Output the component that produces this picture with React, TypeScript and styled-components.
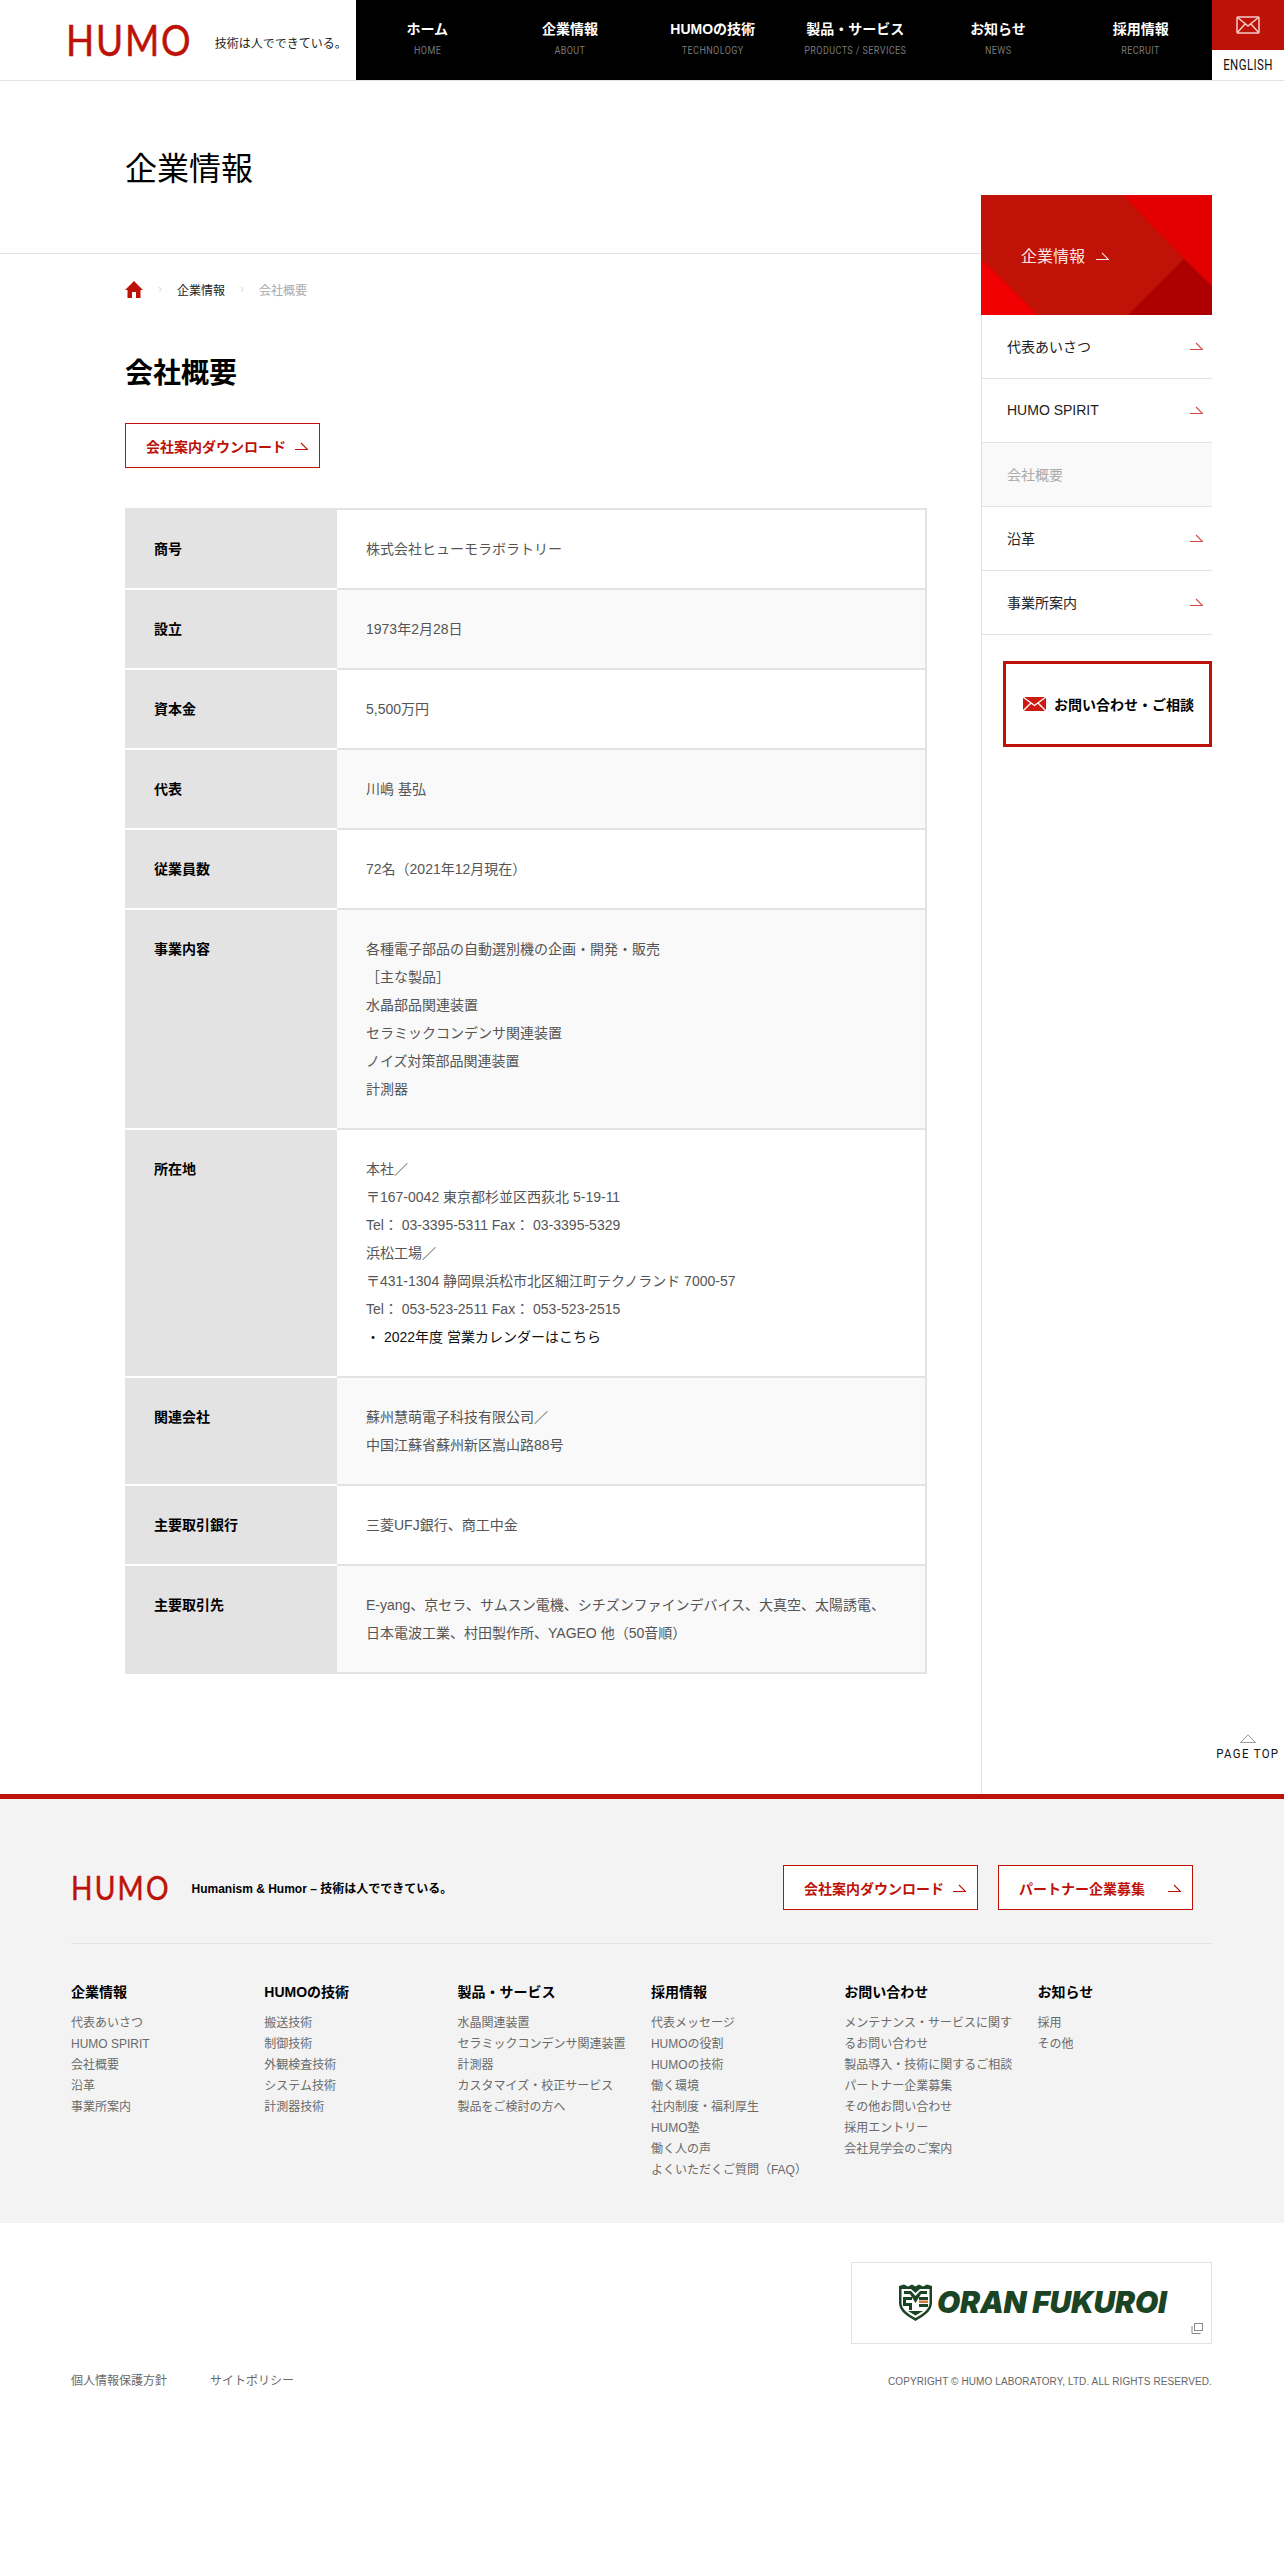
import React from 'react';
import styled, { createGlobalStyle } from 'styled-components';

const RED = '#bd1208';
const LINE = '#e3e3e3';
const SANS = '"Liberation Sans", "Noto Sans CJK JP", sans-serif';
const NARROW = 'Roboto, "Noto Sans CJK JP", sans-serif';

const GlobalStyle = createGlobalStyle`
  html, body {
    margin: 0;
    padding: 0;
    background: #fff;
  }
  body {
    font-family: ${SANS};
    color: #000;
    min-height: 2568px;
  }
  ul { list-style: none; margin: 0; padding: 0; }
`;

const Header = styled.header`
  display: flex;
  height: 80px;
  border-bottom: 1px solid ${LINE};
`;
const Brand = styled.div`
  width: 356px;
  padding-left: 66px;
  box-sizing: border-box;
  display: flex;
  align-items: center;
`;
const LogoText = styled.span<{ $size: number; $spacing: number }>`
  display: inline-block;
  font-family: Lato, sans-serif;
  font-size: ${p => p.$size}px;
  letter-spacing: ${p => p.$spacing}px;
  -webkit-text-stroke: 0.5px ${RED};
  line-height: 1;
  color: ${RED};
  transform: scaleX(0.88);
  transform-origin: left center;
  margin-right: -0.4em;
`;
const Tagline = styled.span`
  font-size: 12px;
  margin: 4px 0 0 22px;
  color: #222;
  white-space: nowrap;
`;
const GlobalNav = styled.nav`
  flex: 1;
  background: #000;
  display: grid;
  grid-template-columns: repeat(6, 1fr);
`;
const NavItem = styled.a`
  display: flex;
  flex-direction: column;
  align-items: center;
  padding-top: 20px;
`;
const NavLabel = styled.span`
  font-size: 14px;
  line-height: 18px;
  font-weight: bold;
  color: #fff;
`;
const NavSub = styled.span`
  font-family: ${NARROW};
  font-size: 11px;
  line-height: 14px;
  margin-top: 6px;
  letter-spacing: 0.5px;
  color: #777;
  white-space: nowrap;
  transform: scaleX(0.82);
`;
const HeaderSide = styled.div`
  width: 72px;
  display: flex;
  flex-direction: column;
`;
const MailBox = styled.a`
  height: 50px;
  background: ${RED};
  display: flex;
  align-items: center;
  justify-content: center;
`;
const EnglishLink = styled.a`
  flex: 1;
  display: flex;
  align-items: center;
  justify-content: center;
  font-family: ${NARROW};
  font-size: 14px;
  letter-spacing: 0.5px;
  color: #111;
  transform: scaleX(0.82);
`;

const Body = styled.div`
  display: flex;
`;
const MainColumn = styled.div`
  width: 981px;
  flex: none;
`;
const TitleBlock = styled.div`
  height: 173px;
  box-sizing: border-box;
  padding: 70px 0 0 125px;
  border-bottom: 1px solid ${LINE};
`;
const PageTitle = styled.h1`
  margin: 0;
  font-size: 32px;
  line-height: 36px;
  font-weight: normal;
`;
const Main = styled.main`
  padding: 0 54px 120px 125px;
`;
const Breadcrumb = styled.ol`
  list-style: none;
  margin: 0;
  padding: 26px 0 0;
  display: flex;
  align-items: center;
  height: 18px;
  font-size: 12px;
`;
const Crumb = styled.li<{ $current?: boolean }>`
  display: flex;
  align-items: center;
  color: ${p => (p.$current ? '#aaa' : '#222')};
`;
const CrumbSep = styled.li`
  width: 34px;
  text-align: center;
  color: #ddd;
  font-size: 12px;
`;
const Heading = styled.h2`
  margin: 56px 0 0;
  font-size: 28px;
  line-height: 40px;
  font-weight: bold;
`;
const OutlineButton = styled.a`
  width: 195px;
  height: 45px;
  box-sizing: border-box;
  border: 1px solid ${RED};
  background: #fff;
  display: flex;
  align-items: center;
  justify-content: space-between;
  padding: 0 11px 0 20px;
  font-size: 14px;
  font-weight: bold;
  color: ${RED};
  white-space: nowrap;
`;
const TopButton = styled(OutlineButton)`
  margin-top: 29px;
`;
const InfoTable = styled.table`
  margin-top: 40px;
  width: 802px;
  border-collapse: separate;
  border-spacing: 0;
  table-layout: fixed;
  border-right: 2px solid ${LINE};
  border-bottom: 2px solid ${LINE};
`;
const Th = styled.th`
  width: 212px;
  box-sizing: border-box;
  background: ${LINE};
  border-top: 2px solid #fff;
  padding: 25px 29px;
  text-align: left;
  vertical-align: top;
  font-size: 14px;
  line-height: 28px;
  font-weight: bold;
  tr:first-child & { border-top-color: ${LINE}; }
`;
const Td = styled.td<{ $even: boolean }>`
  background: ${p => (p.$even ? '#f9f9f9' : '#fff')};
  border-top: 2px solid ${LINE};
  padding: 25px 29px;
  font-size: 14px;
  line-height: 28px;
  color: #555;
`;
const Line = styled.div``;
const BlackLink = styled.a`
  color: #111;
`;

const SideColumn = styled.aside`
  width: 231px;
  flex: none;
  padding-top: 114px;
  display: flex;
  flex-direction: column;
`;
const SideBanner = styled.a`
  position: relative;
  height: 120px;
  background: #c01206;
  display: flex;
  align-items: center;
  padding-left: 40px;
  gap: 11px;
  font-size: 16px;
  color: #fbe4e2;
  overflow: hidden;
`;
const BannerShapes = styled.svg`
  position: absolute;
  inset: 0;
`;
const BannerLabel = styled.span`
  position: relative;
`;
const SideBody = styled.div`
  flex: 1;
  border-left: 1px solid ${LINE};
`;
const SideItem = styled.li<{ $current?: boolean }>`
  height: 64px;
  box-sizing: border-box;
  border-bottom: 1px solid ${LINE};
  background: ${p => (p.$current ? '#f9f9f9' : '#fff')};
  color: ${p => (p.$current ? '#aaa' : '#222')};
  display: flex;
  align-items: center;
  justify-content: space-between;
  padding: 0 9px 2px 25px;
  font-size: 14px;
`;
const ContactBox = styled.a`
  margin: 26px 0 0 21px;
  height: 86px;
  box-sizing: border-box;
  border: 3px solid ${RED};
  display: flex;
  align-items: center;
  padding-left: 17px;
  gap: 8px;
  font-size: 14px;
  font-weight: bold;
  white-space: nowrap;
`;
const Gutter = styled.div`
  flex: 1;
  display: flex;
  flex-direction: column;
  justify-content: flex-end;
  align-items: center;
  padding-bottom: 32px;
`;
const PageTop = styled.a`
  font-family: ${NARROW};
  font-size: 13px;
  line-height: 16px;
  letter-spacing: 1.5px;
  color: #111;
  white-space: nowrap;
  margin-top: 3px;
  transform: scaleX(0.88);
`;

const Footer = styled.footer`
  border-top: 5px solid ${RED};
  background: #f3f3f3;
  height: 429px;
  box-sizing: border-box;
  padding: 0 72px 0 71px;
`;
const FooterTop = styled.div`
  height: 145px;
  box-sizing: border-box;
  border-bottom: 1px solid ${LINE};
  display: flex;
  align-items: flex-start;
  padding-top: 66px;
`;
const FooterBrand = styled.div`
  flex: 1;
  display: flex;
  align-items: center;
  height: 45px;
`;
const FooterTagline = styled.span`
  font-size: 12px;
  font-weight: bold;
  margin-left: 20px;
`;
const FooterButtons = styled.div`
  display: flex;
  gap: 20px;
  margin-right: 19px;
`;
const Columns = styled.div`
  display: grid;
  grid-template-columns: repeat(6, 193.3px);
  padding-top: 38px;
`;
const ColTitle = styled.h3`
  margin: 0 0 11px;
  font-size: 14px;
  line-height: 20px;
  font-weight: bold;
`;
const ColLink = styled.li`
  width: 170px;
  font-size: 12px;
  line-height: 21px;
  color: #6a6a6a;
`;

const Bottom = styled.div`
  padding: 39px 72px 0 71px;
`;
const SponsorRow = styled.div`
  display: flex;
  justify-content: flex-end;
`;
const SponsorBox = styled.a`
  position: relative;
  width: 361px;
  height: 82px;
  box-sizing: border-box;
  border: 1px solid ${LINE};
  display: flex;
  align-items: center;
  padding: 0 0 2px 47px;
  gap: 5px;
`;
const SponsorName = styled.span`
  font-family: Inter, sans-serif;
  font-size: 30px;
  font-weight: 900;
  font-style: italic;
  letter-spacing: -0.2px;
  color: #1a4423;
  white-space: nowrap;
`;
const ExternalMark = styled.svg`
  position: absolute;
  right: 8px;
  bottom: 9px;
`;
const LegalRow = styled.div`
  display: flex;
  justify-content: space-between;
  align-items: center;
  margin-top: 27px;
`;
const LegalLinks = styled.div`
  display: flex;
  gap: 43px;
  font-size: 12px;
  color: #6a6a6a;
`;
const Copyright = styled.small`
  font-size: 10px;
  letter-spacing: 0.1px;
  color: #666;
  margin-top: 3px;
`;

const Arrow = ({ color = RED, opacity = 1 }: { color?: string; opacity?: number }) => (
  <svg width="13" height="8" viewBox="0 0 13 8" fill="none" style={{ opacity, flex: 'none' }}>
    <path d="M0 7.5H12.5L6 1" stroke={color} strokeWidth="1.1" />
  </svg>
);

const HomeIcon = () => (
  <svg width="18" height="17" viewBox="0 0 18 17">
    <path d="M9 0L18 9H15.500V17H11V11H7V17H2.500V9H0Z" fill={RED} />
  </svg>
);

const MailOutline = () => (
  <svg width="24" height="18" viewBox="0 0 24 18" fill="none" stroke="#f6c9c6" strokeWidth="1.5">
    <rect x="1" y="1" width="22" height="16" rx="1" />
    <path d="M1 1L12 10L23 1M1 17L9 8M23 17L15 8" />
  </svg>
);

const MailFilled = () => (
  <svg width="23" height="14" viewBox="0 0 23 14" style={{ flex: 'none' }}>
    <rect width="23" height="14" fill="#cf1a12" />
    <path d="M0 0L11.500 8.500L23 0M0 14L8 6M23 14L15 6" fill="none" stroke="#fff" strokeWidth="1.4" />
  </svg>
);

const Shield = () => (
  <svg width="33" height="37" viewBox="0 0 33 37" style={{ flex: 'none' }}>
    <path d="M0 2L5 0.500L9 2.500L13 0.500L16.500 2.500L20 0.500L24 2.500L28 0.500L33 2V19C33 27 25 32 16.500 37C8 32 0 27 0 19Z" fill="#1a4423" />
    <path d="M2.500 5H12L16.500 9L21 5H30.500V19C30.500 25.500 23.500 30 16.500 34C9.500 30 2.500 25.500 2.500 19Z" fill="#fff" />
    <path d="M5 7H12L16.500 12L21 7H28V10H22L16.500 19L11 10H5ZM4 13H13V16H7V19H13V26H10V22H4ZM20 13H29V16H20ZM20 20H29V23H20ZM9 27H24L16.500 31.500Z" fill="#1a4423" />
    <rect x="20" y="16.500" width="9" height="2.500" fill="#d9743b" />
  </svg>
);

const NAV = [
  ['ホーム', 'HOME'],
  ['企業情報', 'ABOUT'],
  ['HUMOの技術', 'TECHNOLOGY'],
  ['製品・サービス', 'PRODUCTS / SERVICES'],
  ['お知らせ', 'NEWS'],
  ['採用情報', 'RECRUIT']
];

const SIDE = ['代表あいさつ', 'HUMO SPIRIT', '会社概要', '沿革', '事業所案内'];

const ROWS: [string, React.ReactNode[]][] = [
  ['商号', ['株式会社ヒューモラボラトリー']],
  ['設立', ['1973年2月28日']],
  ['資本金', ['5,500万円']],
  ['代表', ['川嶋 基弘']],
  ['従業員数', ['72名（2021年12月現在）']],
  [
    '事業内容',
    [
      '各種電子部品の自動選別機の企画・開発・販売',
      '［主な製品］',
      '水晶部品関連装置',
      'セラミックコンデンサ関連装置',
      'ノイズ対策部品関連装置',
      '計測器'
    ]
  ],
  [
    '所在地',
    [
      '本社／',
      '〒167-0042 東京都杉並区西荻北 5-19-11',
      'Tel： 03-3395-5311 Fax： 03-3395-5329',
      '浜松工場／',
      '〒431-1304 静岡県浜松市北区細江町テクノランド 7000-57',
      'Tel： 053-523-2511 Fax： 053-523-2515',
      <BlackLink key="calendar">・ 2022年度 営業カレンダーはこちら</BlackLink>
    ]
  ],
  ['関連会社', ['蘇州慧萌電子科技有限公司／', '中国江蘇省蘇州新区嵩山路88号']],
  ['主要取引銀行', ['三菱UFJ銀行、商工中金']],
  [
    '主要取引先',
    [
      'E-yang、京セラ、サムスン電機、シチズンファインデバイス、大真空、太陽誘電、',
      '日本電波工業、村田製作所、YAGEO 他（50音順）'
    ]
  ]
];

const FOOTER_COLUMNS: [string, string[]][] = [
  ['企業情報', ['代表あいさつ', 'HUMO SPIRIT', '会社概要', '沿革', '事業所案内']],
  ['HUMOの技術', ['搬送技術', '制御技術', '外観検査技術', 'システム技術', '計測器技術']],
  [
    '製品・サービス',
    ['水晶関連装置', 'セラミックコンデンサ関連装置', '計測器', 'カスタマイズ・校正サービス', '製品をご検討の方へ']
  ],
  [
    '採用情報',
    [
      '代表メッセージ',
      'HUMOの役割',
      'HUMOの技術',
      '働く環境',
      '社内制度・福利厚生',
      'HUMO塾',
      '働く人の声',
      'よくいただくご質問（FAQ）'
    ]
  ],
  [
    'お問い合わせ',
    [
      'メンテナンス・サービスに関するお問い合わせ',
      '製品導入・技術に関するご相談',
      'パートナー企業募集',
      'その他お問い合わせ',
      '採用エントリー',
      '会社見学会のご案内'
    ]
  ],
  ['お知らせ', ['採用', 'その他']]
];

const App = () => (
  <>
    <GlobalStyle />
    <Header>
      <Brand>
        <LogoText $size={42} $spacing={2}>HUMO</LogoText>
        <Tagline>技術は人でできている。</Tagline>
      </Brand>
      <GlobalNav>
        {NAV.map(([label, sub]) => (
          <NavItem key={sub}>
            <NavLabel>{label}</NavLabel>
            <NavSub>{sub}</NavSub>
          </NavItem>
        ))}
      </GlobalNav>
      <HeaderSide>
        <MailBox>
          <MailOutline />
        </MailBox>
        <EnglishLink>ENGLISH</EnglishLink>
      </HeaderSide>
    </Header>

    <Body>
      <MainColumn>
        <TitleBlock>
          <PageTitle>企業情報</PageTitle>
        </TitleBlock>
        <Main>
          <Breadcrumb>
            <Crumb><HomeIcon /></Crumb>
            <CrumbSep>›</CrumbSep>
            <Crumb>企業情報</Crumb>
            <CrumbSep>›</CrumbSep>
            <Crumb $current>会社概要</Crumb>
          </Breadcrumb>
          <Heading>会社概要</Heading>
          <TopButton>
            会社案内ダウンロード
            <Arrow />
          </TopButton>
          <InfoTable>
            <tbody>
              {ROWS.map(([name, lines], i) => (
                <tr key={name}>
                  <Th>{name}</Th>
                  <Td $even={i % 2 === 1}>
                    {lines.map((line, j) => (
                      <Line key={j}>{line}</Line>
                    ))}
                  </Td>
                </tr>
              ))}
            </tbody>
          </InfoTable>
        </Main>
      </MainColumn>

      <SideColumn>
        <SideBanner>
          <BannerShapes width="231" height="120" viewBox="0 0 231 120">
            <polygon points="142,0 231,0 231,91 203,64" fill="#e20000" />
            <polygon points="203,64 231,91 231,120 147,120" fill="#ad0000" />
            <polygon points="0,64 57,120 0,120" fill="#f00000" />
          </BannerShapes>
          <BannerLabel>企業情報</BannerLabel>
          <BannerLabel>
            <Arrow color="#fbe4e2" />
          </BannerLabel>
        </SideBanner>
        <SideBody>
          <ul>
            {SIDE.map(item => (
              <SideItem key={item} $current={item === '会社概要'}>
                {item}
                {item !== '会社概要' && <Arrow opacity={0.75} />}
              </SideItem>
            ))}
          </ul>
          <ContactBox>
            <MailFilled />
            お問い合わせ・ご相談
          </ContactBox>
        </SideBody>
      </SideColumn>

      <Gutter>
        <svg width="16" height="9" viewBox="0 0 16 9" fill="none">
          <path d="M0.500 8.500L8 0.800L15.500 8.500Z" stroke="#999" />
        </svg>
        <PageTop>PAGE TOP</PageTop>
      </Gutter>
    </Body>

    <Footer>
      <FooterTop>
        <FooterBrand>
          <LogoText $size={32} $spacing={2.5}>HUMO</LogoText>
          <FooterTagline>Humanism &amp; Humor – 技術は人でできている。</FooterTagline>
        </FooterBrand>
        <FooterButtons>
          <OutlineButton>
            会社案内ダウンロード
            <Arrow />
          </OutlineButton>
          <OutlineButton>
            パートナー企業募集
            <Arrow />
          </OutlineButton>
        </FooterButtons>
      </FooterTop>
      <Columns>
        {FOOTER_COLUMNS.map(([title, links]) => (
          <div key={title}>
            <ColTitle>{title}</ColTitle>
            <ul>
              {links.map(link => (
                <ColLink key={link}>{link}</ColLink>
              ))}
            </ul>
          </div>
        ))}
      </Columns>
    </Footer>

    <Bottom>
      <SponsorRow>
        <SponsorBox>
          <Shield />
          <SponsorName>ORAN FUKUROI</SponsorName>
          <ExternalMark width="12" height="11" viewBox="0 0 12 11" fill="none" stroke="#888">
            <rect x="3.500" y="0.500" width="8" height="7" />
            <path d="M1 3V10.500H9.500" />
          </ExternalMark>
        </SponsorBox>
      </SponsorRow>
      <LegalRow>
        <LegalLinks>
          <span>個人情報保護方針</span>
          <span>サイトポリシー</span>
        </LegalLinks>
        <Copyright>COPYRIGHT © HUMO LABORATORY, LTD. ALL RIGHTS RESERVED.</Copyright>
      </LegalRow>
    </Bottom>
  </>
);

export default App;
